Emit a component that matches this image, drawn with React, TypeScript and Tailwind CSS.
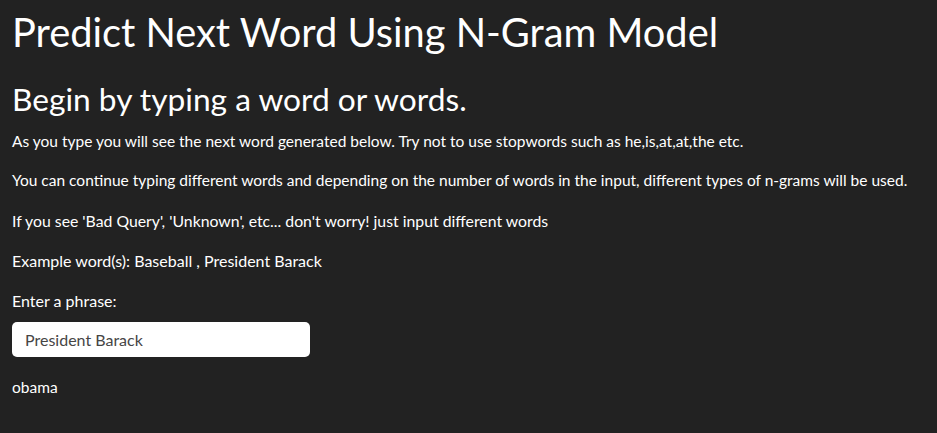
export default function App() {
  return (
    <main
      className="min-h-screen bg-[#222222] px-[12px] pt-[10px] text-white"
      style={{ fontFamily: "Lato, 'Open Sans', sans-serif" }}
    >
      <h1 className="text-[39.8px] leading-[1.1] font-normal">
        Predict Next Word Using N-Gram Model
      </h1>

      <h2 className="mt-[28px] text-[31.7px] leading-[1.1] font-normal">
        Begin by typing a word or words.
      </h2>

      <div className="mt-[14px] text-[15.5px] leading-[21px]">
        <p className="mb-[18px]">
          As you type you will see the next word generated below. Try not to use stopwords such as he,is,at,at,the etc.
        </p>
        <p className="mb-[19px]">
          You can continue typing different words and depending on the number of words in the input, different types of n-grams will be used.
        </p>
        <p className="mb-[19px] text-[15.8px]">
          If you see 'Bad Query', 'Unknown', etc... don't worry! just input different words
        </p>
        <p className="mb-[19px] text-[16px]">Example word(s): Baseball , President Barack</p>

        <label className="block text-[16px]" htmlFor="phrase">
          Enter a phrase:
        </label>
        <input
          id="phrase"
          type="text"
          defaultValue="President Barack"
          className="mt-[11px] block h-[35px] w-[298px] rounded-[5px] bg-white px-[13px] text-[16px] text-[#464545] outline-none"
          style={{ fontFamily: "Lato, 'Open Sans', sans-serif" }}
        />

        <p className="mt-[20px]">obama</p>
      </div>
    </main>
  );
}
